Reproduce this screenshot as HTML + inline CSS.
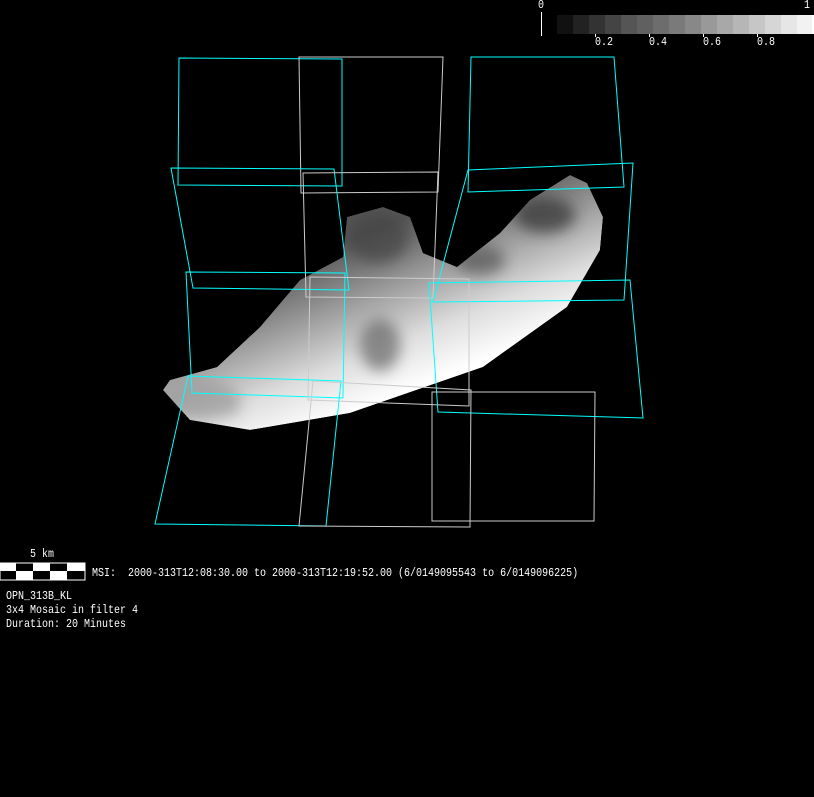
<!DOCTYPE html>
<html><head><style>
html,body{margin:0;padding:0;background:#000;}
body{width:814px;height:797px;position:relative;overflow:hidden;font-family:"Liberation Mono","DejaVu Sans Mono",monospace;color:#fff;}
.t{position:absolute;font-size:10px;line-height:12px;white-space:pre;transform:scaleY(1.15);transform-origin:0 0;}
</style></head><body>
<svg width="814" height="797" style="position:absolute;left:0;top:0">
<defs>
<linearGradient id="g" gradientUnits="userSpaceOnUse" x1="400" y1="220" x2="460" y2="370">
<stop offset="0" stop-color="#555"/>
<stop offset="0.35" stop-color="#999"/>
<stop offset="0.7" stop-color="#ddd"/>
<stop offset="1" stop-color="#fff"/>
</linearGradient>
<filter id="b"><feGaussianBlur stdDeviation="7"/></filter>
<clipPath id="c"><path d="M163,390 L170,380 L217,367 L260,327 L300,280 L343,257 L347,217 L383,207 L410,217 L423,253 L457,267 L500,233 L530,200 L570,175 L587,183 L603,217 L600,250 L567,307 L483,367 L350,413 L250,430 L190,420 Z"/></clipPath>
</defs>
<g>
<rect x="557" y="15" width="16" height="19" fill="#111"/>
<rect x="573" y="15" width="16" height="19" fill="#222"/>
<rect x="589" y="15" width="16" height="19" fill="#333"/>
<rect x="605" y="15" width="16" height="19" fill="#444"/>
<rect x="621" y="15" width="16" height="19" fill="#555"/>
<rect x="637" y="15" width="16" height="19" fill="#606060"/>
<rect x="653" y="15" width="16" height="19" fill="#6d6d6d"/>
<rect x="669" y="15" width="16" height="19" fill="#7a7a7a"/>
<rect x="685" y="15" width="16" height="19" fill="#888"/>
<rect x="701" y="15" width="16" height="19" fill="#999"/>
<rect x="717" y="15" width="16" height="19" fill="#a8a8a8"/>
<rect x="733" y="15" width="16" height="19" fill="#b6b6b6"/>
<rect x="749" y="15" width="16" height="19" fill="#c6c6c6"/>
<rect x="765" y="15" width="16" height="19" fill="#d6d6d6"/>
<rect x="781" y="15" width="16" height="19" fill="#e6e6e6"/>
<rect x="797" y="15" width="16" height="19" fill="#f2f2f2"/>
<rect x="812" y="15" width="2" height="19" fill="#fff"/>
<line x1="541.5" y1="12" x2="541.5" y2="36" stroke="#fff"/>
<line x1="595.5" y1="34" x2="595.5" y2="37" stroke="#fff"/>
<line x1="649.5" y1="34" x2="649.5" y2="37" stroke="#fff"/>
<line x1="703.5" y1="34" x2="703.5" y2="37" stroke="#fff"/>
<line x1="757.5" y1="34" x2="757.5" y2="37" stroke="#fff"/>
</g>
<g clip-path="url(#c)">
<path d="M163,390 L170,380 L217,367 L260,327 L300,280 L343,257 L347,217 L383,207 L410,217 L423,253 L457,267 L500,233 L530,200 L570,175 L587,183 L603,217 L600,250 L567,307 L483,367 L350,413 L250,430 L190,420 Z" fill="url(#g)"/>
<g filter="url(#b)" opacity="0.7">
<ellipse cx="378" cy="238" rx="30" ry="25" fill="#444"/>
<ellipse cx="380" cy="345" rx="20" ry="26" fill="#666"/>
<ellipse cx="545" cy="215" rx="30" ry="18" fill="#333"/>
<ellipse cx="225" cy="405" rx="14" ry="10" fill="#333"/>
<ellipse cx="480" cy="260" rx="25" ry="15" fill="#555"/>
<ellipse cx="200" cy="400" rx="40" ry="20" fill="#999"/>
</g>
</g>
<g fill="none" stroke="#0ff" stroke-width="1">
<polygon points="179,58 342,59 342,186 178,185"/>
<polygon points="299,57 443,57 438,192 301,193" stroke="#ccc"/>
<polygon points="471,57 614,57 624,187 468,192"/>
<polygon points="171,168 334,169 349,290 193,288"/>
<polygon points="303,173 438,172 433,298 306,297" stroke="#ccc"/>
<polygon points="468,170 633,163 624,300 433,302"/>
<polygon points="186,272 345,273 343,398 192,393"/>
<polygon points="310,277 469,279 469,406 308,400" stroke="#ccc"/>
<polygon points="429,283 630,280 643,418 438,412"/>
<polygon points="188,376 341,381 326,526 155,524"/>
<polygon points="313,381 471,390 470,527 299,526" stroke="#ccc"/>
<polygon points="432,392 595,392 594,521 432,521" stroke="#ccc"/>
</g>
<rect x="0" y="563" width="85" height="17" fill="#fff"/>
<rect x="16" y="563" width="17" height="8" fill="#000"/>
<rect x="50" y="563" width="17" height="8" fill="#000"/>
<rect x="0" y="571" width="16" height="9" fill="#000"/>
<rect x="33" y="571" width="17" height="9" fill="#000"/>
<rect x="67" y="571" width="18" height="9" fill="#000"/>
<rect x="0" y="563" width="85" height="17" fill="none" stroke="#fff"/>
</svg>
<div class="t" style="left:538px;top:0px">0</div>
<div class="t" style="left:804px;top:0px">1</div>
<div class="t" style="left:595px;top:37px">0.2</div>
<div class="t" style="left:649px;top:37px">0.4</div>
<div class="t" style="left:703px;top:37px">0.6</div>
<div class="t" style="left:757px;top:37px">0.8</div>
<div class="t" style="left:30px;top:549px">5 km</div>
<div class="t" style="left:92px;top:568px">MSI:  2000-313T12:08:30.00 to 2000-313T12:19:52.00 (6/0149095543 to 6/0149096225)</div>
<div class="t" style="left:6px;top:591px">OPN_313B_KL</div>
<div class="t" style="left:6px;top:605px">3x4 Mosaic in filter 4</div>
<div class="t" style="left:6px;top:619px">Duration: 20 Minutes</div>
</body></html>
